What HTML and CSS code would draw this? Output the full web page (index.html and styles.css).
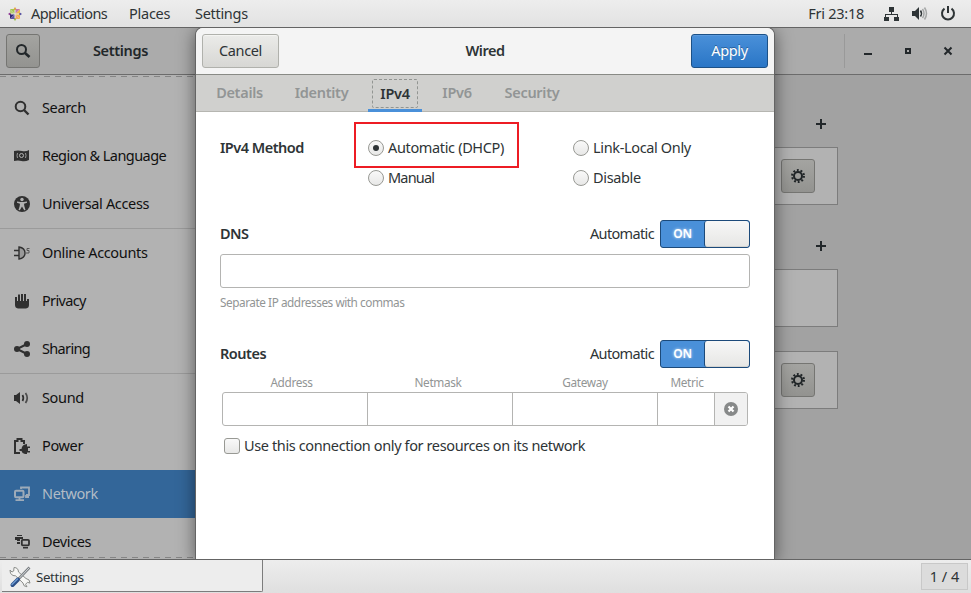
FILE: index.html
```html
<!DOCTYPE html>
<html lang="en">
<head>
<meta charset="utf-8">
<title>Settings</title>
<link rel="stylesheet" href="styles.css">
</head>
<body>
<div class="screen">
  <header class="topbar">
    <svg class="distro" width="14" height="14" viewBox="0 0 14 14">
      <path d="M7 0l2 3H5z" fill="#e0a63c"/><path d="M14 7l-3 2V5z" fill="#514b9e"/><path d="M7 14l-2-3h4z" fill="#9ac04b"/><path d="M0 7l3-2v4z" fill="#8c3391"/>
      <path d="M2 2h4.500v4.500z" fill="#a6c84e"/><path d="M2 2v4.500h4.500z" fill="#b8cf77"/><path d="M12 2v4.500H7.500z" fill="#eeb84c"/><path d="M12 2H7.500v4.500z" fill="#c779a7"/>
      <path d="M2 12V7.500h4.500z" fill="#302b76"/><path d="M2 12h4.500V7.500z" fill="#6157a5"/><path d="M12 12V7.500H7.500z" fill="#eeb84c"/><path d="M12 12H7.500V7.500z" fill="#f1a769"/>
    </svg>
    <span class="menu m-apps">Applications</span>
    <span class="menu m-places">Places</span>
    <span class="menu m-settings">Settings</span>
    <span class="clock">Fri 23:18</span>
    <svg class="tray" width="16" height="16" viewBox="0 0 16 16" fill="#2e3436"><path d="M5 1h5v5H5zM0 11h5v4H0zM10 11h5v4h-5z"/><path d="M7 6h1v2h6v3h-1V9H2v2H1V8h6z"/></svg>
    <svg class="tray" width="16" height="16" viewBox="0 0 16 16"><path d="M0 5h3l4-4v13l-4-4H0z" fill="#2e3436"/><path d="M8.500 4.500q2 3 0 6" fill="none" stroke="#2e3436" stroke-width="1.500"/><path d="M10.500 3q3 4.500 0 9M12.500 1.500q4 6 0 12" fill="none" stroke="#a5a7a7" stroke-width="1.500"/></svg>
    <svg class="tray" width="16" height="16" viewBox="0 0 16 16" fill="none" stroke="#2e3436" stroke-width="2"><path d="M4.500 2.600a6 6 0 1 0 7 0M8 0v7"/></svg>
  </header>

  <div class="desktop">
    <div class="window">
      <div class="titlebar">
        <div class="titlebar-side">
          <span class="btn-dim"><svg width="16" height="16" viewBox="0 0 16 16" fill="none" stroke="#22272a"><circle cx="6.500" cy="6.500" r="4.500" stroke-width="2"/><path d="M10 10l4.500 4" stroke-width="2.600"/></svg></span>
          <b class="app-title">Settings</b>
        </div>
        <div class="controls">
          <svg width="16" height="16" viewBox="0 0 16 16"><path d="M4 10h8v2H4z"/></svg>
          <svg width="16" height="16" viewBox="0 0 16 16"><path d="M5 5h6v6H5zM7 7v2h2V7z" fill-rule="evenodd"/></svg>
          <svg width="16" height="16" viewBox="0 0 16 16"><path d="M4.500 4.500l7 7M11.500 4.500l-7 7" stroke="#22272a" stroke-width="2"/></svg>
        </div>
      </div>
      <div class="panes">
        <nav class="sidebar">
          <a class="row"><svg width="16" height="16" viewBox="0 0 16 16" fill="none" stroke="#303030"><circle cx="6.500" cy="6.500" r="4.800" stroke-width="2"/><path d="M10 10l4.500 4.500" stroke-width="2.400"/></svg><span>Search</span></a>
          <a class="row"><svg width="16" height="16" viewBox="0 0 16 16"><path d="M0 3q4-1 8 0t7-1v10q-4 2-7.500 1T0 13z" fill="#303030"/><circle cx="7.500" cy="7.500" r="2" fill="none" stroke="#b2b2b2"/><path d="M3.500 5q-1 2.500 0 5M11.500 5q1 2.500 0 5" fill="none" stroke="#999"/></svg><span class="n-region">Region &amp; Language</span></a>
          <a class="row"><svg width="16" height="16" viewBox="0 0 16 16"><circle cx="8" cy="8" r="8" fill="#303030"/><circle cx="8" cy="3.500" r="1.700" fill="#b2b2b2"/><path d="M3 5.500l3.500.5h3l3.500-.5v1.300l-3 .9.300 2.300 1.200 4-1.300.3L8 10.500l-2.200 3.800-1.300-.3 1.200-4L6 7.700l-3-.9z" fill="#b2b2b2"/></svg><span>Universal Access</span></a>
          <a class="row sep"><svg width="16" height="16" viewBox="0 0 16 16"><path d="M5 2q6 1 6 6t-6 6z" fill="#999" stroke="#303030" stroke-width="1.400"/><path d="M0 5.500h5M0 10.500h5" stroke="#303030" stroke-width="1.500"/><path d="M15.500 3.500h-2.500v2h2v2.500h-3" fill="none" stroke="#555"/></svg><span>Online Accounts</span></a>
          <a class="row"><svg width="16" height="16" viewBox="0 0 16 16" fill="#303030"><path d="M1 4h2v4h1V1.500h2V8h1V1h2v7h1V1h2v7h1V6h2v6q0 3-3 3.500H4Q1 15 1 12z"/></svg><span class="n-short">Privacy</span></a>
          <a class="row"><svg width="16" height="16" viewBox="0 0 16 16" fill="#303030"><path d="M13 3L3 8l10 5" fill="none" stroke="#303030" stroke-width="2"/><circle cx="13" cy="3" r="3"/><circle cx="3" cy="8" r="3"/><circle cx="13" cy="13" r="3"/></svg><span class="n-short">Sharing</span></a>
          <a class="row sep"><svg width="16" height="16" viewBox="0 0 16 16" fill="none" stroke="#303030" stroke-width="1.700"><path d="M0 5h2l4-3v12l-4-3H0z" fill="#303030" stroke="none"/><path d="M8.500 5q1.700 3 0 6"/><path d="M11.500 3q3.500 5 0 10" stroke="#4b4b4b"/></svg><span>Sound</span></a>
          <a class="row"><svg width="16" height="16" viewBox="0 0 16 16"><path d="M6 15H1V3h2.500V1h4v2H10v3" fill="none" stroke="#303030" stroke-width="2"/><path d="M13 6v2.500h3V10h-2v3h2v1.500h-3V16h-2q-3-.5-3.500-3H5.500v-2h2Q8 7 11 6.500z" fill="#303030"/></svg><span>Power</span></a>
          <a class="row active"><svg width="16" height="16" viewBox="0 0 16 16" fill="none" stroke="#9eabb9"><path d="M7 3V1.500h8V9h-3M12 9v2h3" stroke-width="1.800"/><rect x="1" y="4.800" width="8.500" height="6.500" rx="1" stroke-width="2"/><path d="M5.500 12v2M1.500 14.200h8.500" stroke-width="1.800"/></svg><span>Network</span></a>
          <a class="row"><svg width="16" height="16" viewBox="0 0 16 16" fill="#303030"><path d="M3 1h5v1H3zM1 3h8v2H6v2H3V6H1z"/><rect x="7.800" y="5.800" width="7.200" height="5.500" rx="1" fill="none" stroke="#303030" stroke-width="1.800"/><path d="M9 13h5v1.500H9zM3 8h3v2H3z"/></svg><span>Devices</span></a>
        </nav>
        <main class="content">
          <div class="add"><svg width="10" height="10" viewBox="0 0 10 10"><path d="M4 0h2v4h4v2H6v4H4V6H0V4h4z"/></svg></div>
          <div class="card"><span class="btn-dim gear"><svg width="16" height="16" viewBox="0 0 16 16" fill="none" stroke="#202527"><circle cx="8" cy="8" r="4" stroke-width="2"/><circle cx="8" cy="8" r="5.900" stroke-width="2.100" stroke-dasharray="1.850 1.857"/></svg></span></div>
          <div class="add second"><svg width="10" height="10" viewBox="0 0 10 10"><path d="M4 0h2v4h4v2H6v4H4V6H0V4h4z"/></svg></div>
          <div class="card"></div>
          <div class="card last"><span class="btn-dim gear"><svg width="16" height="16" viewBox="0 0 16 16" fill="none" stroke="#202527"><circle cx="8" cy="8" r="4" stroke-width="2"/><circle cx="8" cy="8" r="5.900" stroke-width="2.100" stroke-dasharray="1.850 1.857"/></svg></span></div>
        </main>
      </div>
    </div>

    <section class="dialog">
      <div class="dialog-head">
        <span class="button"><span>Cancel</span></span>
        <b>Wired</b>
        <span class="button primary"><span>Apply</span></span>
      </div>
      <div class="tabs">
        <span class="tab t1">Details</span><span class="tab t2">Identity</span><span class="tab t3 current"><span class="focus">IPv4</span></span><span class="tab t3">IPv6</span><span class="tab t5">Security</span>
      </div>
      <div class="form">
        <div class="methods">
          <b class="m-label">IPv4 Method</b>
          <label class="opt"><i class="radio on"></i><span class="o-auto">Automatic (DHCP)</span><i class="highlight"></i></label>
          <label class="opt"><i class="radio"></i><span class="o-link">Link-Local Only</span></label>
          <label class="opt low"><i class="radio"></i><span class="o-manual">Manual</span></label>
          <label class="opt"><i class="radio"></i><span class="o-disable">Disable</span></label>
        </div>
        <div class="section-head"><b>DNS</b><span class="auto">Automatic</span><span class="switch"><span class="on-text">ON</span><i class="knob"></i></span></div>
        <div class="entry"></div>
        <div class="hint"><span>Separate IP addresses with commas</span></div>
        <div class="section-head"><b>Routes</b><span class="auto">Automatic</span><span class="switch"><span class="on-text">ON</span><i class="knob"></i></span></div>
        <div class="cols"><span>Address</span><span>Netmask</span><span>Gateway</span><span>Metric</span></div>
        <div class="route">
          <i></i><i></i><i></i><i></i>
          <span class="remove"><svg width="14" height="14" viewBox="0 0 14 14"><circle cx="7" cy="7" r="7" fill="#878989"/><path d="M4.500 4.500l5 5M9.500 4.500l-5 5" stroke="#fff" stroke-width="2.200"/></svg></span>
        </div>
        <label class="check"><i class="box"></i><span>Use this connection only for resources on its network</span></label>
      </div>
    </section>
  </div>

  <footer class="taskbar">
    <div class="task">
      <svg width="22" height="22" viewBox="0 0 22 22"><path d="M5 1.500l-.3 3.500L3 6 1 4q-.5 4 3 5.500l2.500.3L14 17q0 3.500 4 3.800l-1.500-2.500 2-2 2.500.8q0-4-4-4.600L9.500 6Q9.300 1.500 5 1.500z" fill="#f7f7f5" stroke="#8b8d8a" stroke-width="1"/><path d="M20.500 1.500L9.500 13" stroke="#7b7f83" stroke-width="2.600"/><path d="M20 2L10 12.500" stroke="#d4d8db" stroke-width="1"/><path d="M9 13.500L3.500 19" stroke="#2c4f87" stroke-width="4" stroke-linecap="round"/><path d="M8.500 13L3 18.500" stroke="#6e9bd0" stroke-width="1.500" stroke-linecap="round"/></svg>
      <span>Settings</span>
    </div>
    <div class="pager"><span>1 / 4</span></div>
  </footer>
</div>
</body>
</html>
```
FILE: styles.css
```css
* { box-sizing: border-box; }
body { margin: 0; }
.screen {
  width: 971px; height: 593px; overflow: hidden;
  display: flex; flex-direction: column;
  font: 14.5px/20px "Noto Sans", "Open Sans", sans-serif;
  letter-spacing: -0.35px; color: #2e3436; white-space: nowrap;
}
svg { display: block; flex: none; }
i { display: block; flex: none; }
b { font-weight: 600; letter-spacing: -0.5px; }

/* Optical centring: the face sits low in its line box. */
.menu, .clock, .app-title, .row span, .button span, .dialog-head b, .opt span, .section-head b, .auto, .check span, .pager span { padding-bottom: 2px; }

.topbar {
  height: 28px; flex: none; display: flex; align-items: center;
  background: linear-gradient(#ededed, #e2e2e2); border-bottom: 1px solid #646464;
  padding: 0 15px 0 8px;
}
.distro { margin-right: 9px; }
.m-apps { width: 98px; letter-spacing: -0.6px; }
.m-places { width: 66px; letter-spacing: -0.25px; }
.m-settings { letter-spacing: -0.3px; }
.clock { margin-left: auto; margin-right: 20px; letter-spacing: -0.25px; }
.tray + .tray { margin-left: 12px; }

.desktop { position: relative; flex: 1; min-height: 0; overflow: hidden; }
.window { height: 531px; display: flex; flex-direction: column; }
.titlebar {
  height: 47px; flex: none; display: flex; justify-content: space-between;
  background: #ababab; border-bottom: 1px solid #6c6c6c; padding: 6px 15px 6px 6px;
}
.titlebar-side { display: flex; align-items: center; }
.btn-dim {
  width: 34px; height: 34px; flex: none; display: flex; align-items: center; justify-content: center;
  border: 1px solid #757572; border-radius: 3px; background: linear-gradient(#a4a4a1, #939390);
}
.app-title { margin-left: 53px; color: #22272a; letter-spacing: -0.35px; }
.controls {
  display: flex; align-items: center; gap: 24px; height: 34px;
  border-left: 1px solid #999; padding-left: 15px; fill: #22272a;
}
.panes { flex: 1; display: flex; min-height: 0; }
.sidebar {
  width: 196px; flex: none; height: 484px; overflow: hidden; background: #b2b2b2; padding-top: 9px; color: #101010;
  background-image: repeating-linear-gradient(90deg, #858585 0 6px, transparent 6px 11px), repeating-linear-gradient(90deg, #858585 0 6px, transparent 6px 11px);
  background-size: 100% 1px; background-position: 0 1px, 0 482px; background-repeat: no-repeat;
}
.row { height: 48px; display: flex; align-items: center; gap: 12px; padding-left: 14px; }
.row .n-region { letter-spacing: -0.55px; }
.row .n-short { letter-spacing: -0.65px; }
.row.sep { height: 49px; border-top: 1px solid #9b9b9b; }
.row.active { background: #336699; color: #b2bcc6; }
.row:last-child { height: 39px; align-items: flex-start; padding-top: 13px; }
.row:last-child svg { margin-top: 3px; }
.content { flex: 1; background: #a2a2a2; padding: 44px 133px 0 60px; }
.add { height: 10px; display: flex; justify-content: flex-end; padding-right: 12px; fill: #22272a; }
.card {
  height: 58px; margin-top: 18px; border: 1px solid #7c7c7c; background: #b2b2b2;
  display: flex; align-items: center; justify-content: flex-end; padding-right: 22px;
}
.add.second { margin-top: 36px; }
.card.last { margin-top: 24px; }

.dialog {
  position: absolute; left: 196px; top: 0; width: 578px; height: 531px;
  background: #fff; border-radius: 7px 7px 0 0;
  box-shadow: 0 0 0 1px #646464, 0 3px 17px 1px rgba(0,0,0,.5);
}
.dialog-head {
  height: 47px; display: flex; align-items: center; justify-content: space-between; padding: 0 6px 1px;
  background: #f4f4f4; border-bottom: 1px solid #888a85; border-radius: 7px 7px 0 0;
}
.button {
  width: 77px; height: 34px; border: 1px solid #b0b1ac; border-radius: 3px;
  display: flex; align-items: center; justify-content: center;
  background: linear-gradient(#ebebe9, #d7d7d4); box-shadow: inset 0 1px #f4f4f2;
}
.button.primary { color: #fff; border-color: #1c5187; background: linear-gradient(#4a90d9, #2a76c6); box-shadow: inset 0 1px #5b9add; text-shadow: 0 -1px #285f99; }
.tabs {
  height: 37px; display: flex; gap: 8px; padding-left: 8px;
  background: #d0d0ce; border-bottom: 1px solid #b6b6b1;
  font-weight: 600; letter-spacing: -0.3px; color: #929595;
}
.tab { height: 37px; display: flex; align-items: center; justify-content: center; padding-bottom: 3px; }
.t1 { width: 71px; } .t2 { width: 77px; } .t3 { width: 54px; } .t5 { width: 80px; }
.current { color: #2e3436; border-bottom: 3px solid #4a90d9; padding-bottom: 0; }
.focus { width: 46px; height: 29px; border: 1px dashed #929592; border-radius: 2px; display: flex; align-items: center; justify-content: center; margin-top: 3px; padding-bottom: 2px; }

.form { padding: 26px 24px 0; }
.methods { display: grid; grid-template-columns: 148px 205px 1fr; grid-template-rows: 20px 20px; row-gap: 10px; }
.m-label { line-height: 18px; }
.opt { position: relative; display: flex; align-items: center; gap: 4px; }
.opt.low { grid-column: 2; }
.o-manual { letter-spacing: -0.8px; }
.radio {
  width: 16px; height: 16px; border: 1px solid #989994; border-radius: 50%;
  background: linear-gradient(#f9f9f9, #e8e8e7); display: flex; align-items: center; justify-content: center;
}
.radio.on::after { content: ""; width: 6px; height: 6px; border-radius: 50%; background: #2e3436; }
.highlight { position: absolute; left: -14px; top: -16px; width: 165px; height: 46px; border: 2px solid #ed1c24; }
.section-head { height: 28px; display: flex; align-items: center; margin-top: 32px; }
.auto { margin-left: auto; margin-right: 6px; letter-spacing: -0.65px; }
.switch { width: 90px; height: 28px; border: 1px solid #1c4a7a; border-radius: 3px; background: #4a90d9; display: flex; overflow: hidden; }
.on-text { width: 44px; color: #fff; font-size: 12px; font-weight: 600; line-height: 25px; text-align: center; text-shadow: 0 0 3px #ddeaff; }
.knob { width: 45px; border-left: 1px solid #1c4a7a; border-radius: 3px; background: linear-gradient(#f7f7f7, #e6e6e4); box-shadow: inset 0 -1px #d3d3d0; }
.entry { height: 34px; margin-top: 6px; border: 1px solid #b4b4b2; border-radius: 3px; }
.hint { height: 20px; margin-top: 4px; font-size: 11.800px; letter-spacing: -0.46px; color: #929595; }
.hint + .section-head { margin-top: 28px; }
.cols { display: grid; grid-template-columns: 139px 154px 140px 64px; margin: 4px 0 0 2px; height: 20px; font-size: 11.800px; letter-spacing: -0.35px; color: #929595; text-align: center; }
.route { display: flex; width: 526px; height: 34px; margin: 0 0 0 2px; border: 1px solid #b4b4b2; border-radius: 3px; overflow: hidden; }
.route i { width: 145px; border-right: 1px solid #b4b4b2; }
.route i:nth-child(4) { width: 57px; }
.remove { flex: 1; background: #f1f1f1; display: flex; align-items: center; justify-content: center; }
.check { display: flex; align-items: center; gap: 4px; height: 20px; margin: 10px 0 0 4px; letter-spacing: -0.38px; }
.box { width: 16px; height: 16px; border: 1px solid #989994; border-radius: 3px; background: linear-gradient(#f9f9f9, #e8e8e7); }

.taskbar { height: 34px; flex: none; border-top: 1px solid #646464; display: flex; justify-content: space-between; align-items: flex-start; padding: 0 3px 0 2px; background: linear-gradient(#ededed, #dfdfdf); }
.task { width: 261px; height: 32px; display: flex; align-items: center; gap: 5px; padding: 2px 0 0 7px; background: #ededed; border: solid #7c7c7c; border-width: 0 1px 1px 0; border-radius: 0 0 2px 0; font-size: 13.300px; }
.pager { width: 47px; height: 27px; margin-top: 3px; border: 1px solid #c8c8c8; background: #dcdcdc; display: flex; align-items: center; justify-content: center; letter-spacing: 0; }
```
